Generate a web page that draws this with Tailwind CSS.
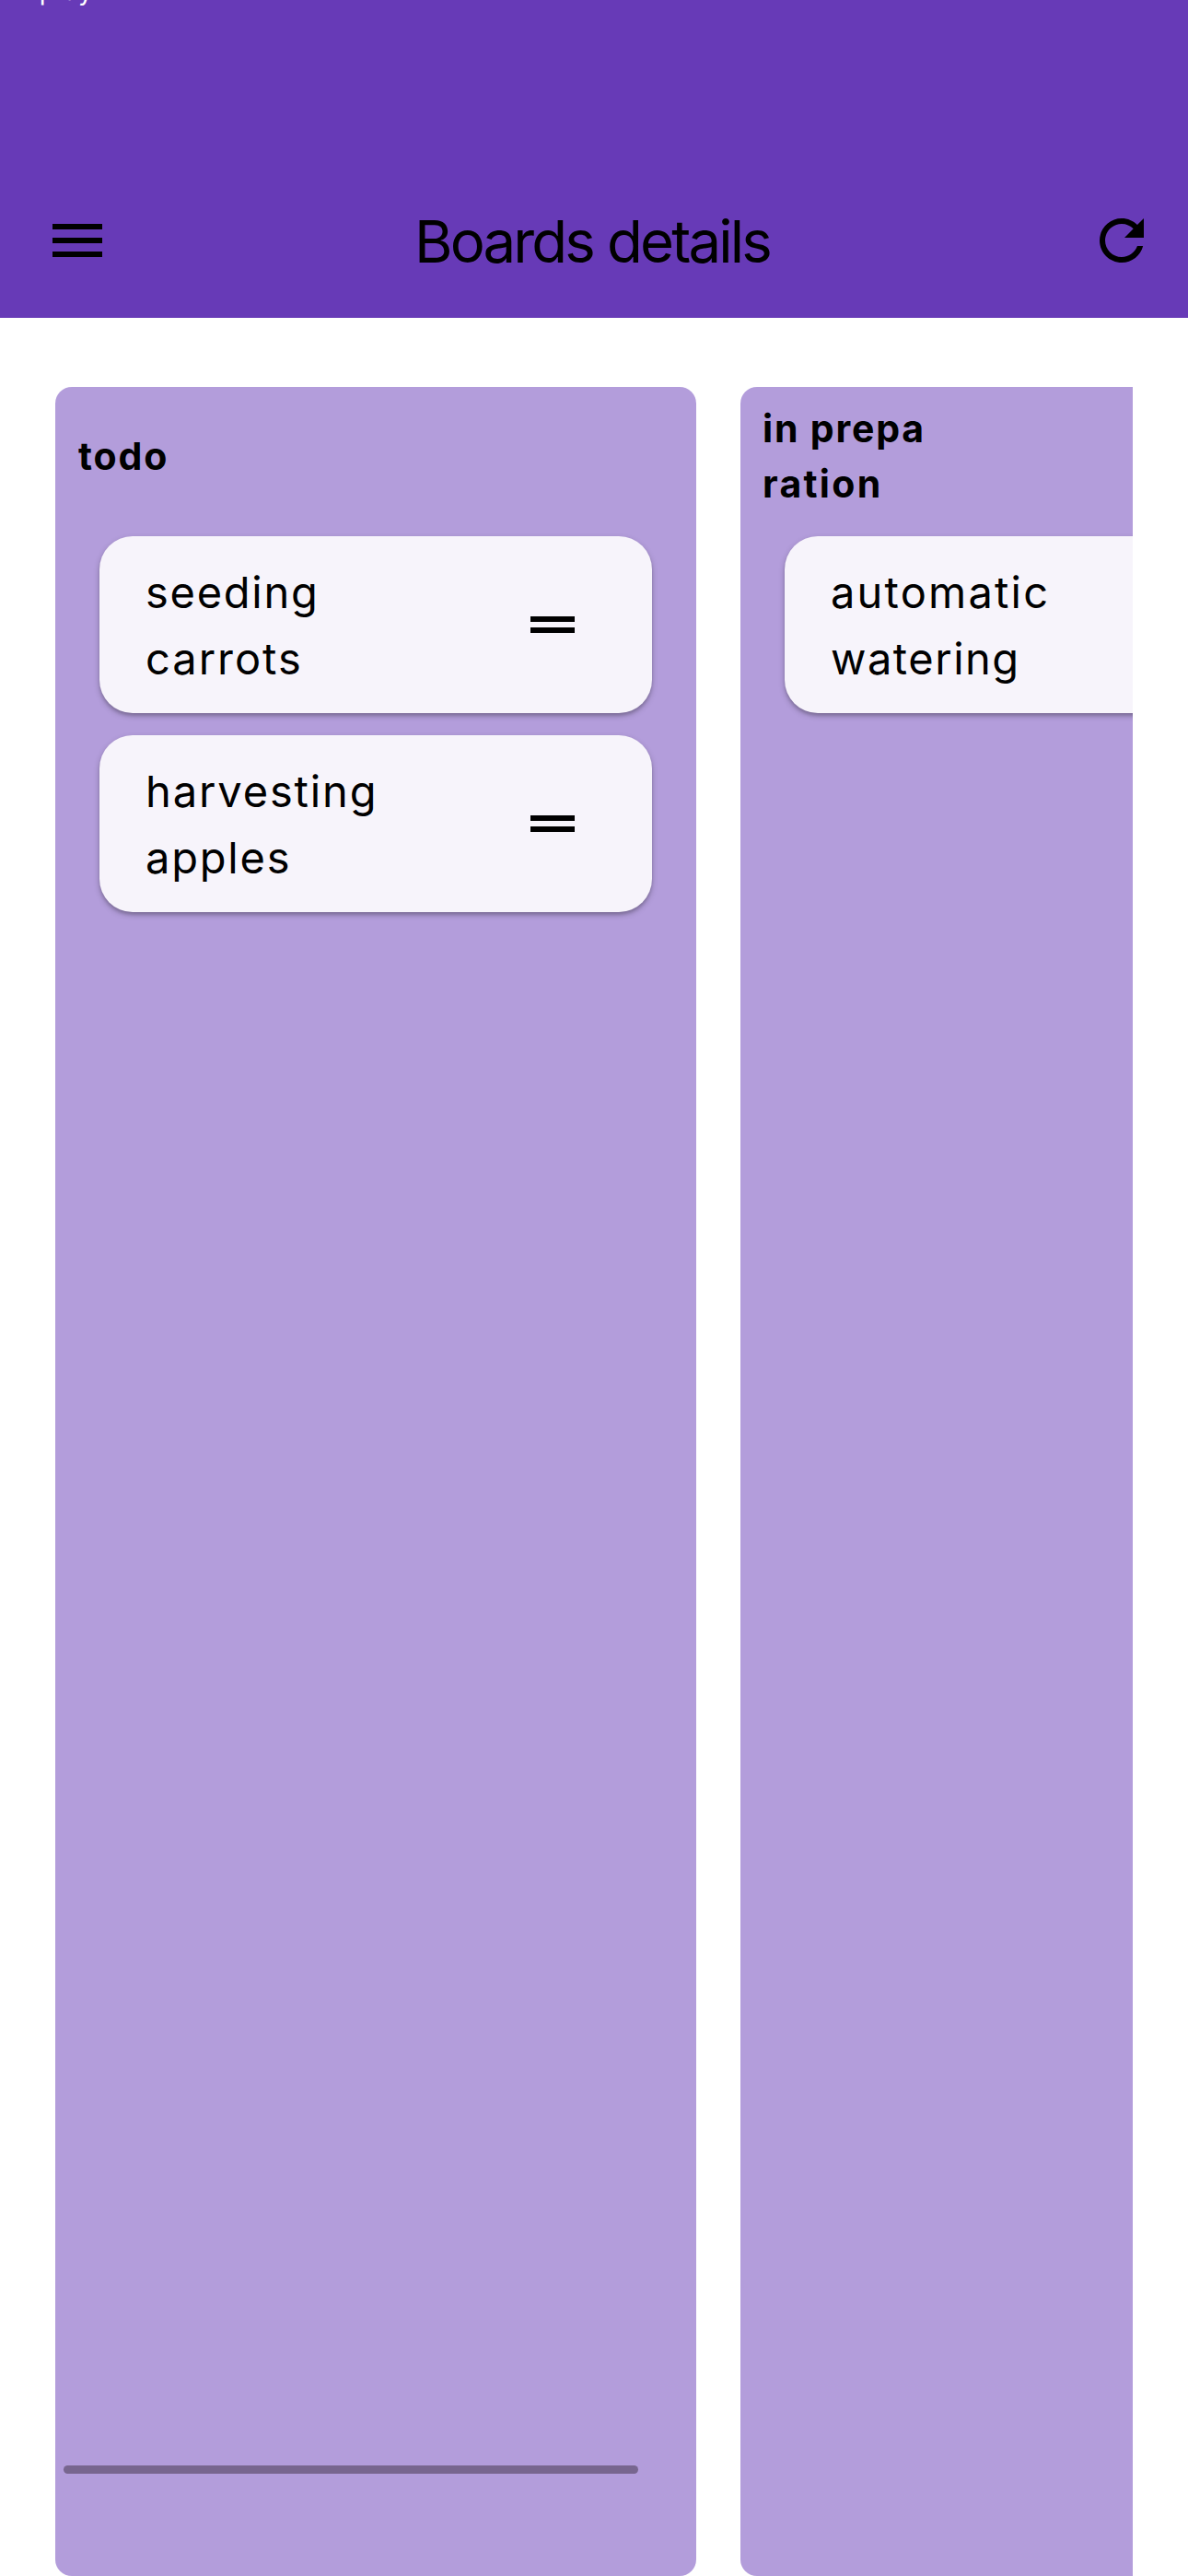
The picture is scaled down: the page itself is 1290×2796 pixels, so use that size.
<!DOCTYPE html>
<html lang="en">
<head>
<meta charset="utf-8">
<title>Boards details</title>
<script src="https://cdn.jsdelivr.net/npm/@tailwindcss/browser@4"></script>
</head>
<body class="relative flex h-[2796px] w-[1290px] flex-col overflow-hidden bg-white font-['Inter',sans-serif] text-black">
  <header class="relative flex h-[345px] shrink-0 items-end bg-[#673ab7] pr-[36px] pb-[36px] pl-[48px]">
    <div class="absolute top-[-24px] left-[1px] text-[28px] leading-[28px] tracking-[1px] text-white">display</div>
    <div class="flex w-full items-center justify-between">
      <svg class="mb-[12px] size-[72px]" viewBox="0 0 24 24"><path d="M3 18h18v-2H3v2zm0-5h18v-2H3v2zm0-7v2h18V6H3z"/></svg>
      <h1 class="relative -top-[5px] -left-[8px] text-[63.5px] leading-[80px] tracking-[-2.85px] whitespace-nowrap">Boards details</h1>
      <svg class="mb-[12px] size-[72px]" viewBox="0 0 24 24"><path d="M17.65 6.35C16.2 4.9 14.21 4 12 4c-4.42 0-7.99 3.58-7.99 8s3.57 8 7.99 8c3.73 0 6.84-2.55 7.73-6h-2.08c-.82 2.33-3.04 4-5.65 4-3.31 0-6-2.69-6-6s2.69-6 6-6c1.66 0 3.14.69 4.22 1.78L13 11h7V4l-2.35 2.35z"/></svg>
    </div>
  </header>

  <main class="mx-[60px] mt-[75px] flex flex-1 gap-[48px] overflow-hidden">
    <section class="flex w-[696px] shrink-0 flex-col rounded-[18px] bg-[#b39ddb]">
      <h2 class="flex h-[150px] flex-col justify-center px-[25px] text-[41px] leading-[60px] font-bold tracking-[1.9px]">todo</h2>
      <div class="mt-[12px] flex flex-col gap-[24px] px-[48px]">
        <article class="flex h-[192px] items-center justify-between rounded-[36px] bg-[#f7f4fb] pr-[72px] pl-[50px] shadow-[0_3px_6px_rgba(0,0,0,0.25),0_3px_3px_rgba(0,0,0,0.1)]">
          <p class="pt-[2px] text-[47px] leading-[72px]"><span class="block tracking-[1.74px]">seeding</span><span class="block tracking-[1.98px]">carrots</span></p>
          <svg class="size-[72px]" viewBox="0 0 24 24"><path d="M20 9H4v2h16V9zM4 15h16v-2H4v2z"/></svg>
        </article>
        <article class="flex h-[192px] items-center justify-between rounded-[36px] bg-[#f7f4fb] pr-[72px] pl-[50px] shadow-[0_3px_6px_rgba(0,0,0,0.25),0_3px_3px_rgba(0,0,0,0.1)]">
          <p class="pt-[2px] text-[47px] leading-[72px]"><span class="block tracking-[1.88px]">harvesting</span><span class="block tracking-[1.79px]">apples</span></p>
          <svg class="size-[72px]" viewBox="0 0 24 24"><path d="M20 9H4v2h16V9zM4 15h16v-2H4v2z"/></svg>
        </article>
      </div>
    </section>

    <section class="flex w-[696px] shrink-0 flex-col rounded-[18px] bg-[#b39ddb]">
      <h2 class="flex h-[150px] flex-col justify-center px-[24px] text-[41px] leading-[60px] font-bold"><span class="tracking-[1.82px]">in prepa</span><span class="tracking-[2.3px]">ration</span></h2>
      <div class="mt-[12px] flex flex-col gap-[24px] px-[48px]">
        <article class="flex h-[192px] items-center justify-between rounded-[36px] bg-[#f7f4fb] pr-[72px] pl-[50px] shadow-[0_3px_6px_rgba(0,0,0,0.25),0_3px_3px_rgba(0,0,0,0.1)]">
          <p class="pt-[2px] text-[47px] leading-[72px]"><span class="block tracking-[2.2px]">automatic</span><span class="block tracking-[1.51px]">watering</span></p>
        </article>
      </div>
    </section>
  </main>

  <!-- horizontal scroll indicator -->
  <div class="absolute top-[2676px] left-[69px] h-[9px] w-[624px] rounded-full bg-[#78668f]"></div>
</body>
</html>
